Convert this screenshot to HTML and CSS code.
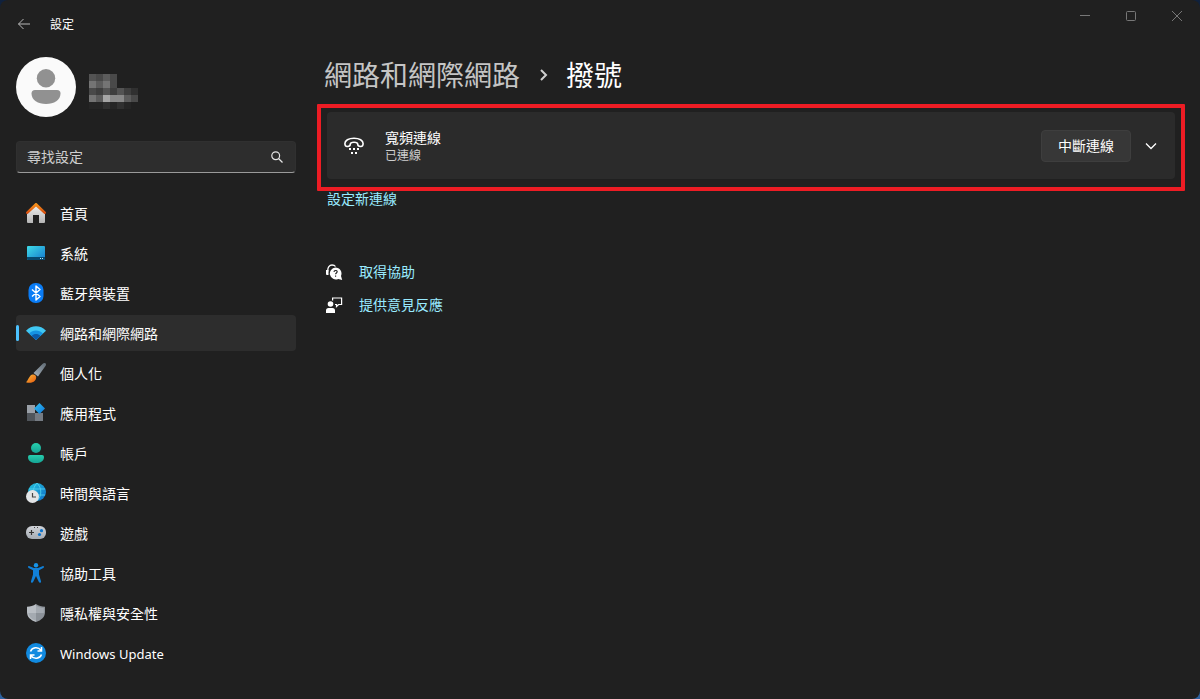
FILE: index.html
```html
<!DOCTYPE html>
<html lang="zh-Hant">
<head>
    <meta charset="UTF-8">
    <meta name="viewport" content="width=device-width, initial-scale=1.0">
    <title>設定</title>
    <link rel="stylesheet" href="styles.css">
</head>
<body>
    <div class="window">
        <header class="titlebar">
            <button class="back" aria-label="返回">
                <svg width="14" height="12" viewBox="0 0 14 12"><path d="M6.5 1 1.5 6l5 5M1.5 6H13" /></svg>
            </button>
            <span class="app-title">設定</span>
            <div class="window-controls">
                <button aria-label="最小化"><svg width="12" height="12" viewBox="0 0 12 12"><path d="M1 5.5h10" /></svg></button>
                <button aria-label="最大化"><svg width="12" height="12" viewBox="0 0 12 12"><rect x="1.5" y="1.5" width="9" height="9" rx="1" /></svg></button>
                <button aria-label="關閉"><svg width="12" height="12" viewBox="0 0 12 12"><path d="M1 1l10 10M11 1 1 11" /></svg></button>
            </div>
        </header>

        <div class="layout">
            <aside class="sidebar">
                <div class="profile">
                    <svg class="avatar" width="60" height="60" viewBox="0 0 60 60">
                        <circle cx="30" cy="30" r="30" fill="#fafafa" />
                        <circle cx="30" cy="21.300" r="9.200" fill="#919191" />
                        <path d="M19 33h22a3.500 3.500 0 0 1 3.500 3.500C44.500 43 38 47 30 47s-14.500-4-14.500-10.500A3.500 3.500 0 0 1 19 33z" fill="#919191" />
                    </svg>
                    <!-- account name, hidden behind a mosaic -->
                    <svg class="mosaic" width="49" height="35" viewBox="0 0 7 5" shape-rendering="crispEdges">
                        <path fill="#535353" d="M0 0h1v1H0zM2 2h1v1H2zM4 2h1v1H4z" />
                        <path fill="#494949" d="M1 0h1v1H1zM3 0h1v1H3zM0 2h1v1H0zM3 1h1v1H3zM6 3h1v1H6z" />
                        <path fill="#5c5c5c" d="M2 0h1v1H2zM1 1h1v1H1zM1 3h1v1H1zM5 3h1v1H5z" />
                        <path fill="#747474" d="M0 1h1v1H0zM2 1h1v1H2zM0 3h1v1H0z" />
                        <path fill="#3e3e3e" d="M1 2h1v1H1zM3 2h1v1H3zM5 2h1v1H5z" />
                        <path fill="#303030" d="M6 2h1v1H6zM2 4h1v1H2zM4 4h1v1H4z" />
                        <path fill="#a6a6a6" d="M2 3h1v1H2z" />
                        <path fill="#888" d="M3 3h2v1H3z" />
                        <path fill="#252525" d="M0 4h2v1H0zM3 4h1v1H3zM5 4h1v1H5z" />
                    </svg>
                </div>

                <form class="search">
                    <input type="search" placeholder="尋找設定" aria-label="尋找設定">
                    <button type="button" aria-label="搜尋">
                        <svg width="12" height="12" viewBox="0 0 12 12"><circle cx="4.700" cy="4.700" r="3.900" /><path d="M7.500 7.500l4 4" /></svg>
                    </button>
                </form>

                <nav class="menu">
                    <a href="#home">
                        <svg width="20" height="20" viewBox="0 0 20 20">
                            <defs>
                                <linearGradient id="wall" x1="0" y1="0" x2="0" y2="1"><stop offset="0" stop-color="#efefef" /><stop offset="1" stop-color="#b5b5b5" /></linearGradient>
                                <linearGradient id="roof" x1="0" y1="0" x2="0" y2="1"><stop offset="0" stop-color="#fb9a1c" /><stop offset="1" stop-color="#d3470f" /></linearGradient>
                            </defs>
                            <path d="M10 2l9 8.500V19a1 1 0 0 1-1 1h-5v-8H7v8H2a1 1 0 0 1-1-1v-8.500z" fill="url(#wall)" />
                            <path d="M10.800.300l9 8.600a1.300 1.300 0 0 1-1.700 1.900L10 3.500l-8.100 7.300A1.300 1.300 0 0 1 .200 8.900l9-8.600a1.200 1.200 0 0 1 1.600 0z" fill="url(#roof)" />
                        </svg>
                        首頁
                    </a>
                    <a href="#system">
                        <svg width="20" height="20" viewBox="0 0 20 20">
                            <defs><linearGradient id="screen" x1="0" y1="0" x2="1" y2="1"><stop offset="0" stop-color="#3fdce8" /><stop offset="1" stop-color="#1478ce" /></linearGradient></defs>
                            <rect x="1" y="3" width="18" height="14" rx="1" fill="url(#screen)" />
                            <path d="M1 14h18v2a1 1 0 0 1-1 1H2a1 1 0 0 1-1-1z" fill="#07486f" />
                            <path d="M14 15h1v1h-1zM16 15h1v1h-1z" fill="#b8e8f8" />
                        </svg>
                        系統
                    </a>
                    <a href="#devices">
                        <svg width="20" height="20" viewBox="0 0 20 20">
                            <rect x="2.500" y="0" width="15" height="20" rx="7" fill="#0a7cf5" />
                            <path d="M6 6.500l8 7-4 3.500V3l4 3.500-8 7" fill="none" stroke="#fff" stroke-width="1.400" stroke-linejoin="round" />
                        </svg>
                        藍牙與裝置
                    </a>
                    <a href="#network" class="active" aria-current="page">
                        <svg width="20" height="20" viewBox="0 0 20 20">
                            <path d="M0 7.700C5.500 1.800 14.500 1.800 20 7.700L10 17z" fill="#40c8f4" />
                            <path d="M3 10.400c4-4 10-4 14 0L10 17z" fill="#1593e2" />
                            <path d="M5.600 12.900c2.600-2.500 6.200-2.500 8.800 0L10 17z" fill="#0b5aa8" />
                        </svg>
                        網路和網際網路
                    </a>
                    <a href="#personalization">
                        <svg width="20" height="20" viewBox="0 0 20 20">
                            <defs>
                                <linearGradient id="handle" x1="1" y1="0" x2="0" y2="1"><stop offset="0" stop-color="#5e6972" /><stop offset="1" stop-color="#a8b4be" /></linearGradient>
                                <linearGradient id="bristle" x1="0" y1="0" x2="1" y2="1"><stop offset="0" stop-color="#fbbd3d" /><stop offset="1" stop-color="#e8590c" /></linearGradient>
                            </defs>
                            <path d="M19.600.400c.9.900.2 2.200-.5 3.200L12 13.500 7.500 10 16.500 1c1-.9 2.300-1.400 3.100-.6z" fill="url(#handle)" />
                            <path d="M4 13.200c2-2.300 4.500-1.800 5.500-.6 1.100 1.300.9 3.500-.7 5.200C6.700 20 3 20.300 0 19.200c1.900-1.500 2-3.700 4-6z" fill="url(#bristle)" />
                        </svg>
                        個人化
                    </a>
                    <a href="#apps">
                        <svg width="20" height="20" viewBox="0 0 20 20">
                            <defs><linearGradient id="tile" x1="0" y1="0" x2="1" y2="1"><stop offset="0" stop-color="#35c3f3" /><stop offset="1" stop-color="#0c74d8" /></linearGradient></defs>
                            <path d="M1 2h8v8H1z" fill="#9aa0a8" />
                            <path d="M1 10h8v8H1z" fill="#50555b" />
                            <path d="M9 10h8v8H9z" fill="#757b83" />
                            <path d="M13.500 0l5.500 5.500-5.500 5.500L8 5.500z" fill="url(#tile)" />
                        </svg>
                        應用程式
                    </a>
                    <a href="#accounts">
                        <svg width="20" height="20" viewBox="0 0 20 20">
                            <defs><linearGradient id="person" x1="0" y1="0" x2="0" y2="1"><stop offset="0" stop-color="#27cfae" /><stop offset="1" stop-color="#15a394" /></linearGradient></defs>
                            <circle cx="10" cy="5" r="5" fill="url(#person)" />
                            <path d="M4 12h12a2 2 0 0 1 2 2c0 4-3.500 6-8 6s-8-2-8-6a2 2 0 0 1 2-2z" fill="url(#person)" />
                        </svg>
                        帳戶
                    </a>
                    <a href="#time">
                        <svg width="20" height="20" viewBox="0 0 20 20">
                            <defs><linearGradient id="globe" x1="0" y1="0" x2="1" y2="1"><stop offset="0" stop-color="#25c4dc" /><stop offset="1" stop-color="#0e6ecb" /></linearGradient></defs>
                            <circle cx="11" cy="9" r="9" fill="url(#globe)" />
                            <path d="M3 6h16M3 12h16M11 0c-5 5-5 13 0 18M11 0c5 5 5 13 0 18" fill="none" stroke="#55d5f0" stroke-width=".8" />
                            <circle cx="6.500" cy="13.500" r="6.500" fill="#e2e4e6" />
                            <path d="M6.500 10v4H10" fill="none" stroke="#444" stroke-width="1.200" />
                        </svg>
                        時間與語言
                    </a>
                    <a href="#gaming">
                        <svg width="20" height="20" viewBox="0 0 20 20">
                            <defs><linearGradient id="pad" x1="0" y1="0" x2="0" y2="1"><stop offset="0" stop-color="#d0d3d8" /><stop offset="1" stop-color="#a5abb3" /></linearGradient></defs>
                            <rect x="0" y="3" width="20" height="13" rx="6" fill="url(#pad)" />
                            <path d="M5.500 7v5M3 9.500h5" stroke="#333" stroke-width="1.200" />
                            <path d="M8 4.500h1M11 4.500h1" stroke="#444" />
                            <circle cx="15.500" cy="7.700" r="1.600" fill="#0c74cc" />
                            <circle cx="13.500" cy="11.500" r="1.600" fill="#0c74cc" />
                        </svg>
                        遊戲
                    </a>
                    <a href="#accessibility">
                        <svg width="20" height="20" viewBox="0 0 20 20">
                            <circle cx="10" cy="2.200" r="2.200" fill="#1794e8" />
                            <path d="M3.500 3.200L8 5h4l4.500-1.800c1.400-.5 2.100 1.300.8 1.900L13 7.200v4.300l2 6.800c.4 1.500-1.500 2.200-2.100.8L10 13l-2.900 6.100c-.6 1.400-2.500.7-2.100-.8l2-6.800V7.200L2.700 5.100c-1.300-.6-.6-2.400.8-1.900z" fill="#1180d8" />
                        </svg>
                        協助工具
                    </a>
                    <a href="#privacy">
                        <svg width="20" height="20" viewBox="0 0 20 20">
                            <path d="M10 1c2.700 1.800 5.700 2.700 9 2.700V9c0 5-3.500 8.200-9 10z" fill="#8c9299" />
                            <path d="M10 1C7.300 2.800 4.300 3.700 1 3.700V9c0 5 3.500 8.200 9 10z" fill="#b9bec4" />
                            <path d="M10 2.400c2.400 1.500 5 2.300 7.800 2.400V10H10zM2.300 10H10v7.700C5.500 16.200 2.800 13.700 2.300 10z" fill="#a4aab1" />
                        </svg>
                        隱私權與安全性
                    </a>
                    <a href="#update" class="latin">
                        <svg width="20" height="20" viewBox="0 0 20 20">
                            <circle cx="10" cy="10" r="10" fill="#118ae0" />
                            <path d="M4.500 8.500C6 4.200 12 3.200 15 7.300M15.500 4v4h-4M15.500 11.500c-1.500 4.300-7.500 5.300-10.500 1.200M4.500 16v-4h4" fill="none" stroke="#fff" stroke-width="1.500" />
                        </svg>
                        Windows Update
                    </a>
                </nav>
            </aside>

            <main class="content">
                <h1 class="breadcrumb">
                    <a href="#network">網路和網際網路</a>
                    <svg width="12" height="14" viewBox="0 0 12 14"><path d="M4 2l5 5-5 5" /></svg>
                    <span>撥號</span>
                </h1>

                <div class="highlight">
                    <section class="card">
                        <svg class="phone" width="20" height="18" viewBox="0 0 20 18">
                            <path d="M.9 6.500C.9 3.500 4.500 1.200 10 1.200s9.100 2.300 9.100 5.300c0 1.700-.7 3.200-2.500 3-2-.2-2.900-.8-2.900-2.300 0-1.300-1.400-2-3.700-2s-3.700.7-3.700 2c0 1.500-.9 2.100-2.900 2.300C1.600 9.700.9 8.200.9 6.500z" />
                            <path class="dots" d="M5 11h2v2H5zM9 11h2v2H9zM13 11h2v2h-2zM7 15h2v2H7zM11 15h2v2h-2z" />
                        </svg>
                        <div class="card-text">
                            <h2>寬頻連線</h2>
                            <p>已連線</p>
                        </div>
                        <button class="disconnect">中斷連線</button>
                        <button class="expand" aria-label="展開">
                            <svg width="12" height="8" viewBox="0 0 12 8"><path d="M1 1.500l5 5 5-5" /></svg>
                        </button>
                    </section>
                </div>
                <a class="new-connection" href="#new">設定新連線</a>

                <div class="support">
                    <a href="#help">
                        <svg width="17" height="17" viewBox="0 0 17 17">
                            <path d="M1.500 10C1 9 1.200 7.500 1.800 7 1.500 3.500 3.500 1 6 1c1.500 0 2.800.5 3.500 1.500" fill="none" stroke="#fff" stroke-width="1.300" />
                            <path d="M0 6h2.500v5H1a1 1 0 0 1-1-1z" fill="#fff" />
                            <path d="M9.500 3.500a6 6 0 0 1 5.500 8.400l1.200 4.100-4-1a6 6 0 1 1-2.700-11.500z" fill="#fff" />
                            <path d="M8 8c0-2 3.200-2 3.200-.2 0 1.200-1.600 1.200-1.600 2.400M9.600 11.500v1.200" fill="none" stroke="#202020" stroke-width="1.100" />
                        </svg>
                        取得協助
                    </a>
                    <a href="#feedback">
                        <svg width="17" height="17" viewBox="0 0 17 17">
                            <circle cx="4.500" cy="7" r="2.800" fill="#fff" />
                            <path d="M2.500 11h4A2.500 2.500 0 0 1 9 13.500V16H0v-2.500A2.500 2.500 0 0 1 2.500 11z" fill="#fff" />
                            <path d="M6.600 3.500V1h9v6.500h-3L10.500 9.500v-2H9" fill="none" stroke="#fff" stroke-width="1.200" />
                        </svg>
                        提供意見反應
                    </a>
                </div>
            </main>
        </div>
    </div>
</body>
</html>
```
FILE: styles.css
```css
* {
    box-sizing: border-box;
}
body {
    margin: 0;
    background: linear-gradient(#10213c, #2e62a0);
    color: #fff;
    font-family: "Noto Sans", "Noto Sans CJK TC", sans-serif;
    font-size: 14px;
    line-height: 20px;
}
a {
    color: inherit;
    text-decoration: none;
}
button {
    padding: 0;
    border: none;
    background: none;
    color: inherit;
    font: inherit;
}
svg {
    display: block;
    flex-shrink: 0;
}
.window {
    min-height: 100vh;
    border-radius: 8px;
    background-color: #202020;
}

/* Title bar */
.titlebar {
    display: flex;
    align-items: center;
    height: 48px;
    padding-left: 17px;
}
.titlebar svg {
    fill: none;
    stroke: #b8b8b8;
}
.app-title {
    margin-left: 19px;
    padding-top: 2px;
    font-size: 12px;
}
.window-controls {
    display: flex;
    align-self: flex-start;
    margin-left: auto;
}
.window-controls button {
    display: flex;
    align-items: center;
    justify-content: center;
    width: 46px;
    height: 32px;
}
.window-controls svg {
    stroke: #777;
}

.layout {
    display: grid;
    grid-template-columns: 280px 1fr;
    gap: 21px;
    padding: 0 15px 0 16px;
}

/* Sidebar */
.profile {
    display: flex;
    align-items: center;
    gap: 13px;
    padding-top: 9px;
}
.mosaic {
    margin-top: 8px;
}
.search {
    display: flex;
    align-items: center;
    height: 32px;
    margin: 24px 0 22px;
    padding: 0 12px 0 10px;
    border: 1px solid #303030;
    border-bottom-color: #9a9a9a;
    border-radius: 4px;
    background-color: #2d2d2d;
}
.search input {
    flex: 1;
    min-width: 0;
    padding: 0;
    border: none;
    outline: none;
    background: none;
    color: #fff;
    font: inherit;
}
.search input::placeholder {
    color: #cfcfcf;
    opacity: 1;
}
.search svg {
    fill: none;
    stroke: #e4e4e4;
    stroke-width: 1.2;
}
.menu {
    display: flex;
    flex-direction: column;
    gap: 4px;
}
.menu a {
    display: flex;
    align-items: center;
    gap: 14px;
    height: 36px;
    padding: 2px 0 0 10px;
    border-radius: 4px;
}
.menu svg {
    margin-bottom: 2px;
}
.menu .latin {
    font-size: 13px;
}
.menu .active {
    position: relative;
    background-color: #2d2d2d;
}
.menu .active::before {
    content: "";
    position: absolute;
    left: 0;
    top: 10px;
    width: 3px;
    height: 16px;
    border-radius: 2px;
    background-color: #4cc2ff;
}

/* Content */
.breadcrumb {
    display: flex;
    align-items: center;
    gap: 17px;
    height: 54px;
    margin: 0 0 2px;
    padding-left: 7px;
    font-size: 28px;
    font-weight: 400;
}
.breadcrumb a {
    color: #c5c5c5;
}
.breadcrumb svg {
    fill: none;
    stroke: #d0d0d0;
    stroke-width: 2;
}
.highlight {
    padding: 4px 6px 8px;
    border: 4px solid #ed1c24;
    border-radius: 1px;
}
.card {
    display: flex;
    align-items: center;
    min-height: 67px;
    padding: 0 18px 0 17px;
    border-radius: 4px;
    background-color: #2b2b2b;
}
.phone {
    fill: none;
    stroke: #fff;
    stroke-width: 1.6;
}
.phone .dots {
    fill: #fff;
    stroke: none;
}
.card-text {
    flex: 1;
    margin-left: 21px;
    padding-top: 1px;
}
.card-text h2 {
    margin: 0;
    font-size: 14px;
    font-weight: 400;
    line-height: 18px;
}
.card-text p {
    margin: 1px 0 0;
    color: #cfcfcf;
    font-size: 12px;
    line-height: 16px;
}
.disconnect {
    height: 32px;
    padding: 0 16px;
    border: 1px solid #3e3e3e;
    border-radius: 4px;
    background-color: #373737;
}
.expand {
    margin-left: 14px;
}
.expand svg {
    fill: none;
    stroke: #fff;
    stroke-width: 1.3;
}
.new-connection {
    display: block;
    width: fit-content;
    margin-left: 10px;
    line-height: 16px;
    color: #99ebff;
}
.support {
    display: flex;
    flex-direction: column;
    align-items: flex-start;
    gap: 13px;
    margin: 55px 0 0 9px;
    color: #99ebff;
}
.support a {
    display: flex;
    align-items: center;
    gap: 16px;
}
```
